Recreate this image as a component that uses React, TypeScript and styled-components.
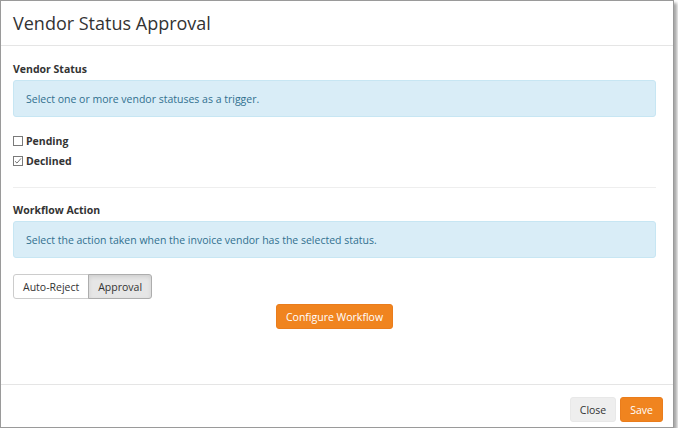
import React from "react";
import styled, { createGlobalStyle } from "styled-components";

const GlobalStyle = createGlobalStyle`
	html, body {
		margin: 0;
		padding: 0;
		background: #ffffff;
	}
	body {
		font-family: "Open Sans", "Liberation Sans", sans-serif;
		color: #333333;
	}
	* {
		box-sizing: border-box;
	}
`;

const Modal = styled.div`
	width: 674px;
	height: 428px;
	border: 1px solid #9a9a9a;
	background: #ffffff;
	box-shadow: 3px 3px 3px rgba(0, 0, 0, 0.35);
	display: flex;
	flex-direction: column;
`;

const Header = styled.div`
	height: 45px;
	border-bottom: 1px solid #e5e5e5;
	display: flex;
	align-items: center;
	padding: 0 12px;
`;

const Title = styled.h4`
	margin: 0;
	font-size: 18px;
	font-weight: 400;
	color: #333333;
`;

const Body = styled.div`
	flex: 1;
	padding: 15px 17px 0 12px;
`;

const SectionLabel = styled.div`
	font-size: 10.5px;
	font-weight: 700;
	color: #333333;
	line-height: 16px;
	margin-bottom: 3px;
`;

const InfoBox = styled.div`
	background: #d9edf7;
	border: 1px solid #c7e6f3;
	border-radius: 3px;
	color: #31708f;
	font-size: 10.5px;
	height: 37px;
	padding: 0 12px;
	display: flex;
	align-items: center;
`;

const CheckList = styled.div`
	margin-top: 15px;
	display: flex;
	flex-direction: column;
	gap: 2px;
`;

const CheckRow = styled.label`
	display: flex;
	align-items: center;
	gap: 3px;
	font-size: 10.5px;
	font-weight: 700;
	line-height: 18px;
`;

const Box = styled.span`
	width: 10px;
	height: 10px;
	border: 1px solid #7a7a7a;
	background: #ffffff;
	display: inline-flex;
	align-items: center;
	justify-content: center;
`;

const Divider = styled.hr`
	border: 0;
	border-top: 1px solid #eeeeee;
	margin: 17px 0 14px;
`;

const ButtonGroup = styled.div`
	margin-top: 16px;
	display: inline-flex;
`;

const GroupButton = styled.button<{ $active?: boolean }>`
	font-family: "Open Sans", "Liberation Sans", sans-serif;
	font-size: 10.5px;
	color: #333333;
	height: 25px;
	padding: 0 9px;
	border: 1px solid ${(p) => (p.$active ? "#adadad" : "#cccccc")};
	background: ${(p) => (p.$active ? "#e6e6e6" : "#ffffff")};
	box-shadow: ${(p) => (p.$active ? "inset 0 2px 4px rgba(0,0,0,0.1)" : "none")};
	&:first-child {
		border-radius: 3px 0 0 3px;
	}
	&:last-child {
		border-radius: 0 3px 3px 0;
		margin-left: -1px;
	}
`;

const Center = styled.div`
	display: flex;
	justify-content: center;
	margin-top: 5px;
`;

const OrangeButton = styled.button`
	font-family: "Open Sans", "Liberation Sans", sans-serif;
	font-size: 10.5px;
	color: #ffffff;
	height: 25px;
	padding: 0 9px;
	border: 1px solid #ea7d1c;
	border-radius: 3px;
	background: #f0841f;
`;

const Footer = styled.div`
	border-top: 1px solid #e5e5e5;
	height: 43px;
	display: flex;
	align-items: flex-end;
	justify-content: flex-end;
	gap: 4px;
	padding: 0 10px 5px 0;
`;

const GreyButton = styled.button`
	font-family: "Open Sans", "Liberation Sans", sans-serif;
	font-size: 10.5px;
	color: #333333;
	height: 25px;
	padding: 0 9px;
	border: 1px solid #e8e8e8;
	border-radius: 3px;
	background: #eeeeee;
`;

const Check = () => (
	<svg width='8' height='8' viewBox='0 0 8 8'>
		<path d='M1 4.2 L3 6.1 L7 1.4' fill='none' stroke='#666' strokeWidth='0.9' />
	</svg>
);

const App: React.FC = () => {
	return (
		<>
			<GlobalStyle />
			<Modal>
				<Header>
					<Title>Vendor Status Approval</Title>
				</Header>
				<Body>
					<SectionLabel>Vendor Status</SectionLabel>
					<InfoBox>Select one or more vendor statuses as a trigger.</InfoBox>
					<CheckList>
						<CheckRow>
							<Box />
							Pending
						</CheckRow>
						<CheckRow>
							<Box>
								<Check />
							</Box>
							Declined
						</CheckRow>
					</CheckList>
					<Divider />
					<SectionLabel>Workflow Action</SectionLabel>
					<InfoBox>Select the action taken when the invoice vendor has the selected status.</InfoBox>
					<ButtonGroup>
						<GroupButton>Auto-Reject</GroupButton>
						<GroupButton $active>Approval</GroupButton>
					</ButtonGroup>
					<Center>
						<OrangeButton>Configure Workflow</OrangeButton>
					</Center>
				</Body>
				<Footer>
					<GreyButton>Close</GreyButton>
					<OrangeButton>Save</OrangeButton>
				</Footer>
			</Modal>
		</>
	);
};

export default App;
